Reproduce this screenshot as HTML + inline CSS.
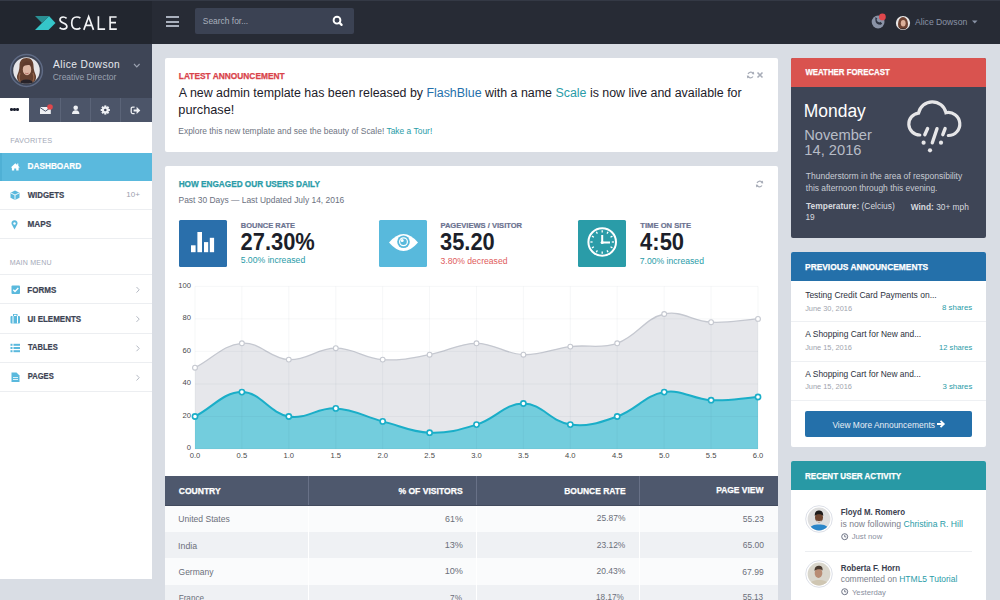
<!DOCTYPE html>
<html><head><meta charset="utf-8">
<style>
*{box-sizing:border-box;margin:0;padding:0}
html,body{width:1000px;height:600px;overflow:hidden}
body{background:#d9dde4;font-family:"Liberation Sans",sans-serif;position:relative;color:#2c313d}
.abs{position:absolute}
.t{position:absolute;white-space:nowrap;line-height:1}
/* topbar */
#top{left:0;top:0;width:1000px;height:43.5px;background:#272b35}
#logo{left:0;top:0;width:151.5px;height:43.5px;background:#22262f}
/* sidebar */
#side{left:0;top:43.5px;width:151.5px;height:535.5px;background:#fff}
#user{left:0;top:0;width:151.5px;height:54.2px;background:#3e4556}
#tabs{left:0;top:54.2px;width:151.5px;height:23.9px;overflow:hidden;background:#4c5569}
.card{position:absolute;background:#fff;border-radius:2px}
.hdr{font-weight:bold;font-size:8.6px;-webkit-text-stroke:0.25px currentColor}
.bo{-webkit-text-stroke:0.2px currentColor}
.mi{position:absolute;left:0;width:151.5px;border-bottom:1px solid #eceef1}
.mi .lbl{position:absolute;left:28px;font-weight:bold;font-size:8.8px;color:#3c4353;line-height:1}
#t1{font-size:8.42px!important;transform:translate(-0.66px,0.94px) scaleX(1.000);transform-origin:0 0}
#t2{font-size:8.63px!important;transform:translate(-0.30px,0.29px) scaleX(1.000);transform-origin:0 0}
#t3{font-size:10.22px!important;transform:translate(-0.26px,1.37px) scaleX(1.000);transform-origin:0 0}
#t4{font-size:8.47px!important;transform:translate(-0.46px,0.74px) scaleX(1.000);transform-origin:0 0}
#t5{font-size:7.60px!important;transform:translate(-0.86px,0.34px) scaleX(0.964);transform-origin:0 0}
#t6{font-size:8.60px!important;transform:translate(-0.47px,-0.62px) scaleX(0.959);transform-origin:0 0}
#t7{font-size:8.60px!important;transform:translate(-0.28px,-0.87px) scaleX(0.910);transform-origin:0 0}
#t8{font-size:8.00px!important;transform:translate(-0.74px,-0.54px) scaleX(1.000);transform-origin:0 0}
#t9{font-size:8.60px!important;transform:translate(-0.59px,-0.66px) scaleX(0.956);transform-origin:0 0}
#t10{font-size:7.60px!important;transform:translate(-1.32px,-0.53px) scaleX(0.928);transform-origin:0 0}
#t11{font-size:8.60px!important;transform:translate(-0.63px,-0.11px) scaleX(0.932);transform-origin:0 0}
#t12{font-size:8.60px!important;transform:translate(-0.56px,0.34px) scaleX(0.929);transform-origin:0 0}
#t13{font-size:8.60px!important;transform:translate(0.07px,-0.57px) scaleX(0.877);transform-origin:0 0}
#t14{font-size:8.60px!important;transform:translate(-0.31px,-0.72px) scaleX(0.884);transform-origin:0 0}
#t15{font-size:8.40px!important;transform:translate(-0.20px,-1.28px) scaleX(0.998);transform-origin:0 0}
#t16{font-size:12.41px!important;transform:translate(-0.16px,-0.73px) scaleX(1.000);transform-origin:0 0}
#t17{font-size:12.74px!important;transform:translate(-0.63px,-0.10px) scaleX(1.000);transform-origin:0 0}
#t18{font-size:8.45px!important;transform:translate(-0.68px,0.38px) scaleX(1.000);transform-origin:0 0}
#t19{font-size:8.40px!important;transform:translate(-0.34px,-0.93px) scaleX(0.981);transform-origin:0 0}
#t20{font-size:8.43px!important;transform:translate(-0.48px,0.77px) scaleX(1.000);transform-origin:0 0}
#t21{font-size:7.40px!important;transform:translate(-0.15px,-0.52px) scaleX(1.010);transform-origin:0 0}
#t22{font-size:23.25px!important;transform:translate(-0.41px,-0.68px) scaleX(0.941);transform-origin:0 0}
#t23{font-size:8.68px!important;transform:translate(-0.36px,-0.59px) scaleX(1.000);transform-origin:0 0}
#t24{font-size:7.40px!important;transform:translate(-0.57px,-0.66px) scaleX(1.023);transform-origin:0 0}
#t25{font-size:23.25px!important;transform:translate(-0.92px,-0.66px) scaleX(0.939);transform-origin:0 0}
#t26{font-size:8.62px!important;transform:translate(-0.23px,-0.14px) scaleX(1.000);transform-origin:0 0}
#t27{font-size:7.40px!important;transform:translate(0.33px,-0.51px) scaleX(1.030);transform-origin:0 0}
#t28{font-size:23.25px!important;transform:translate(0.09px,-1.01px) scaleX(0.945);transform-origin:0 0}
#t29{font-size:8.62px!important;transform:translate(-0.59px,-0.13px) scaleX(1.000);transform-origin:0 0}
#t30{font-size:8.70px!important;transform:translate(-0.29px,-1.20px) scaleX(0.984);transform-origin:0 0}
#t31{font-size:8.70px!important;transform:translate(-0.59px,-1.18px) scaleX(0.988);transform-origin:0 0}
#t32{font-size:8.70px!important;transform:translate(0.21px,-1.46px) scaleX(0.973);transform-origin:0 0}
#t33{font-size:8.70px!important;transform:translate(0.16px,-1.77px) scaleX(0.972);transform-origin:0 0}
#t34{font-size:8.55px!important;transform:translate(-0.63px,0.38px) scaleX(1.000);transform-origin:0 0}
#t35{font-size:8.94px!important;transform:translate(-1.02px,-0.12px) scaleX(1.000);transform-origin:0 0}
#t36{font-size:8.43px!important;transform:translate(-1.62px,-0.52px) scaleX(1.000);transform-origin:0 0}
#t37{font-size:8.53px!important;transform:translate(-0.96px,-0.18px) scaleX(1.000);transform-origin:0 0}
#t38{font-size:8.78px!important;transform:translate(-0.88px,-0.22px) scaleX(1.000);transform-origin:0 0}
#t39{font-size:9.12px!important;transform:translate(-1.03px,-0.73px) scaleX(1.000);transform-origin:0 0}
#t40{font-size:8.42px!important;transform:translate(-1.69px,-0.97px) scaleX(1.000);transform-origin:0 0}
#t41{font-size:8.49px!important;transform:translate(-1.00px,-0.90px) scaleX(1.000);transform-origin:0 0}
#t42{font-size:8.48px!important;transform:translate(-0.43px,-0.40px) scaleX(1.000);transform-origin:0 0}
#t43{font-size:9.14px!important;transform:translate(-1.08px,-0.84px) scaleX(1.000);transform-origin:0 0}
#t44{font-size:8.49px!important;transform:translate(-1.76px,-0.74px) scaleX(1.000);transform-origin:0 0}
#t45{font-size:8.54px!important;transform:translate(-1.27px,-0.31px) scaleX(1.000);transform-origin:0 0}
#t46{font-size:8.17px!important;transform:translate(-0.33px,-0.25px) scaleX(1.000);transform-origin:0 0}
#t47{font-size:8.20px!important;transform:translate(-2.07px,-0.25px) scaleX(1.000);transform-origin:0 0}
#t48{font-size:8.20px!important;transform:translate(-3.16px,-0.71px) scaleX(1.000);transform-origin:0 0}
#t49{font-size:8.20px!important;transform:translate(-1.82px,-0.55px) scaleX(1.000);transform-origin:0 0}
#t50{font-size:8.40px!important;transform:translate(0.41px,-1.71px) scaleX(0.936);transform-origin:0 0}
#t51{font-size:17.47px!important;transform:translate(-0.76px,0.50px) scaleX(1.000);transform-origin:0 0}
#t52{font-size:14.70px!important;transform:translate(-0.37px,-1.41px) scaleX(1.000);transform-origin:0 0}
#t53{font-size:14.69px!important;transform:translate(-0.17px,-1.39px) scaleX(1.000);transform-origin:0 0}
#t54{font-size:8.51px!important;transform:translate(1.28px,0.33px) scaleX(1.000);transform-origin:0 0}
#t55{font-size:8.44px!important;transform:translate(1.36px,0.64px) scaleX(1.000);transform-origin:0 0}
#t56{font-size:8.41px!important;transform:translate(1.60px,0.34px) scaleX(1.000);transform-origin:0 0}
#t57{font-size:8.32px!important;transform:translate(0.89px,-0.69px) scaleX(1.000);transform-origin:0 0}
#t58{font-size:8.35px!important;transform:translate(0.73px,1.74px) scaleX(1.000);transform-origin:0 0}
#t59{font-size:8.80px!important;transform:translate(0.04px,-1.47px) scaleX(0.953);transform-origin:0 0}
#t60{font-size:8.49px!important;transform:translate(0.16px,0.10px) scaleX(1.000);transform-origin:0 0}
#t61{font-size:7.40px!important;transform:translate(0.14px,-0.25px) scaleX(1.000);transform-origin:0 0}
#t62{font-size:7.86px!important;transform:translate(-0.28px,-0.52px) scaleX(1.000);transform-origin:0 0}
#t63{font-size:8.41px!important;transform:translate(0.31px,-0.57px) scaleX(1.000);transform-origin:0 0}
#t64{font-size:7.39px!important;transform:translate(0.18px,-0.99px) scaleX(1.000);transform-origin:0 0}
#t65{font-size:7.59px!important;transform:translate(-0.16px,-1.03px) scaleX(1.000);transform-origin:0 0}
#t66{font-size:8.40px!important;transform:translate(0.36px,-0.15px) scaleX(1.000);transform-origin:0 0}
#t67{font-size:7.39px!important;transform:translate(0.17px,-0.61px) scaleX(1.000);transform-origin:0 0}
#t68{font-size:7.82px!important;transform:translate(-0.12px,-0.55px) scaleX(1.000);transform-origin:0 0}
#t69{font-size:8.45px!important;transform:translate(-0.11px,0.78px) scaleX(1.000);transform-origin:0 0}
#t70{font-size:8.80px!important;transform:translate(0.06px,-1.31px) scaleX(0.913);transform-origin:0 0}
#t71{font-size:8.90px!important;transform:translate(-0.35px,0.43px) scaleX(0.894);transform-origin:0 0}
#t72{font-size:8.65px!important;transform:translate(0.09px,0.16px) scaleX(1.000);transform-origin:0 0}
#t73{font-size:7.77px!important;transform:translate(-0.36px,-0.04px) scaleX(1.000);transform-origin:0 0}
#t74{font-size:8.90px!important;transform:translate(-0.37px,0.81px) scaleX(0.900);transform-origin:0 0}
#t75{font-size:8.50px!important;transform:translate(0.13px,0.37px) scaleX(1.000);transform-origin:0 0}
#t76{font-size:7.72px!important;transform:translate(-0.09px,0.52px) scaleX(1.000);transform-origin:0 0}
</style></head><body>
<div id="top" class="abs"></div>
<div id="logo" class="abs">
  <svg class="abs" style="left:0;top:0" width="152" height="44">
    <polygon points="35,30 49,16 55.5,23 48.5,30" fill="#35c5c9"/>
    <polygon points="35,16 49,16 42,23" fill="#2a8f93"/>
  </svg>
  <svg class="abs" style="left:0;top:0" width="152" height="44"><g fill="none" stroke="#f4f5f7" stroke-width="1.65" stroke-linecap="butt">
    <path d="M66.6,18.3 C65.6,17.4 64.4,17 63.2,17 C61.2,17 60,18.1 60,19.8 C60,21.5 61.3,22.2 63.3,23 C65.6,23.9 66.9,24.8 66.9,26.5 C66.9,28.2 65.5,29.1 63.3,29.1 C61.9,29.1 60.6,28.6 59.6,27.6"/>
    <path d="M80.4,18.2 C79.4,17.3 78.1,17 76.8,17 C73.5,17 71.7,19.5 71.7,23.05 C71.7,26.6 73.4,29.1 76.8,29.1 C78.1,29.1 79.4,28.8 80.4,28"/>
    <path d="M83.8,29.9 L88.65,16.6 L93.5,29.9 M85.5,25.3 H91.8"/>
    <path d="M98.4,16.2 V29.1 H105.1"/>
    <path d="M110.1,16.2 V29.1 H116.8 M110.1,17 H116.6 M110.1,22.6 H116"/>
  </g></svg>
</div>
<div class="abs" style="left:0;top:0;width:1000px;height:1px;background:#343945"></div>
<!-- hamburger -->
<div class="abs" style="left:166px;top:16.3px;width:13px;height:2px;background:#a9b0bd"></div>
<div class="abs" style="left:166px;top:20.6px;width:13px;height:2px;background:#a9b0bd"></div>
<div class="abs" style="left:166px;top:24.9px;width:13px;height:2px;background:#a9b0bd"></div>
<!-- search -->
<div class="abs" style="left:195px;top:8px;width:158.5px;height:26px;background:#3b4253;border-radius:2px"></div>
<div id="t1" class="t" style="left:203.5px;top:16px;font-size:9.6px;color:#a9b0bd">Search for...</div>
<svg class="abs" style="left:330px;top:15px" width="14" height="14">
  <circle cx="7" cy="5.2" r="3.4" fill="none" stroke="#fff" stroke-width="1.9"/>
  <line x1="9.6" y1="7.9" x2="11.6" y2="9.9" stroke="#fff" stroke-width="2.2" stroke-linecap="round"/>
</svg>
<!-- right top -->
<svg class="abs" style="left:868px;top:10px" width="24" height="24">
  <circle cx="10.1" cy="12" r="6.4" fill="#8a93a6"/>
  <path d="M7.3,9.2 q0,5.6 5.6,5.6 l1.3,-1.3 -1.8,-1.8 -1.1,0.9 q-2.2,-0.9 -2.8,-2.8 l0.9,-1.1 -1.8,-1.8z" fill="#2e3442"/>
  <circle cx="14.4" cy="6.9" r="3.4" fill="#e0474c"/>
</svg>
<svg class="abs" style="left:895px;top:14.5px" width="16" height="16">
  <defs><clipPath id="cpa"><circle cx="8" cy="8" r="6.3"/></clipPath></defs>
  <circle cx="8" cy="8" r="7.1" fill="#e8e8e8"/>
  <g clip-path="url(#cpa)"><rect width="16" height="16" fill="#e9e6e6"/>
  <ellipse cx="8" cy="9" rx="5" ry="7" fill="#6e4333"/>
  <ellipse cx="8.2" cy="8.2" rx="2.4" ry="3.3" fill="#dcb09a"/>
  <ellipse cx="8" cy="15.5" rx="4" ry="2.2" fill="#2a2426"/></g>
</svg>
<div id="t2" class="t" style="left:915.3px;top:17.5px;font-size:9.3px;color:#8a93a6">Alice Dowson</div>
<svg class="abs" style="left:971px;top:19px" width="8" height="6"><polygon points="1,1.5 6.5,1.5 3.75,4.5" fill="#8a93a6"/></svg>

<!-- sidebar -->
<div id="side" class="abs">
  <div id="user" class="abs">
    <svg class="abs" style="left:9.4px;top:9.9px" width="36" height="36">
      <defs><clipPath id="cps"><circle cx="17.5" cy="17.5" r="13.3"/></clipPath></defs>
      <circle cx="17.5" cy="17.5" r="15.9" fill="none" stroke="#5f6b85" stroke-width="1.5"/>
      <g clip-path="url(#cps)"><rect width="36" height="36" fill="#e6e5e7"/>
      <path d="M17.5,5 C12.5,5 10.5,8.5 10.5,13 C10.5,17 9,20 8,23 C7.5,26 9.5,28.5 11,30 L24.5,30 C26,28 27.5,26 27,23 C26,20 24.5,17 24.5,13 C24.5,8.5 22.5,5 17.5,5Z" fill="#64402f"/>
      <path d="M11,20 C10,23 9.5,26 11.5,29 M24,20 C25,23 25.5,26 23.5,29" stroke="#94654c" stroke-width="1.2" fill="none"/>
      <ellipse cx="18" cy="16.5" rx="4.2" ry="5.8" fill="#dcb6a3"/>
      <path d="M13,14.5 C13.5,10 16,8.5 18.5,8.5 C21.5,8.5 23,10.5 23,13.5 C21,11.5 16.5,11.5 13,14.5Z" fill="#5e3a2c"/>
      <path d="M16.2,20.2 Q17.8,21.2 19.5,20.2" stroke="#b06a60" stroke-width="0.9" fill="none"/>
      <ellipse cx="17.5" cy="31.5" rx="7.5" ry="5" fill="#27232a"/></g>
    </svg>
    <div id="t3" class="t" style="left:53.2px;top:15.5px;font-size:10.6px;color:#e6e9ee;letter-spacing:0.45px">Alice Dowson</div>
    <div id="t4" class="t" style="left:53.2px;top:28.5px;font-size:9px;color:#9aa1b0">Creative Director</div>
    <svg class="abs" style="left:133px;top:19px" width="8" height="6"><polyline points="1,1 3.8,4 6.6,1" fill="none" stroke="#9aa1b0" stroke-width="1.1"/></svg>
  </div>
  <div id="tabs" class="abs">
    <div class="abs" style="left:0;top:0;width:29px;height:24.5px;background:#fff"></div>
    <div class="abs" style="left:10.2px;top:10.6px;width:2.5px;height:2.5px;border-radius:50%;background:#1c2030;box-shadow:3px 0 #1c2030,6px 0 #1c2030"></div>
    <div class="abs" style="left:60px;top:0;width:1px;height:24.5px;background:#5b6478"></div>
    <div class="abs" style="left:90px;top:0;width:1px;height:24.5px;background:#5b6478"></div>
    <div class="abs" style="left:120px;top:0;width:1px;height:24.5px;background:#5b6478"></div>
    <!-- envelope -->
    <svg class="abs" style="left:39px;top:5.3px" width="16" height="14">
      <rect x="1" y="4" width="10.8" height="7" fill="#eef0f4"/>
      <polyline points="1,4.5 6.4,8.2 11.8,4.5" fill="none" stroke="#4c5569" stroke-width="1"/>
      <circle cx="11" cy="4" r="2.8" fill="#e0474c"/>
    </svg>
    <!-- user -->
    <svg class="abs" style="left:70px;top:5.3px" width="12" height="13">
      <circle cx="5.7" cy="4.7" r="2.3" fill="#eef0f4"/>
      <path d="M2,11 q0,-3.8 3.7,-3.8 q3.7,0 3.7,3.8z" fill="#eef0f4"/>
    </svg>
    <!-- cog -->
    <svg class="abs" style="left:99px;top:5.3px" width="13" height="13">
      <g fill="#eef0f4" transform="translate(6.3,7)">
        <circle r="3.4"/>
        <rect x="-1" y="-4.6" width="2" height="9.2"/>
        <rect x="-1" y="-4.6" width="2" height="9.2" transform="rotate(45)"/>
        <rect x="-1" y="-4.6" width="2" height="9.2" transform="rotate(90)"/>
        <rect x="-1" y="-4.6" width="2" height="9.2" transform="rotate(135)"/>
      </g>
      <circle cx="6.3" cy="7" r="1.3" fill="#3a4154"/>
    </svg>
    <!-- sign out -->
    <svg class="abs" style="left:129px;top:5.3px" width="14" height="13">
      <path d="M5.6,4.1 h-1.9 q-1.5,0 -1.5,1.5 v3.5 q0,1.5 1.5,1.5 h1.9" fill="none" stroke="#eef0f4" stroke-width="1.3"/>
      <path d="M4.6,6.4 h3 v-2.6 l3.7,3.6 -3.7,3.6 v-2.6 h-3z" fill="#eef0f4"/>
    </svg>
  </div>
  <div id="t5" class="t" style="left:10.5px;top:93.5px;font-size:8px;color:#a4a9b8;letter-spacing:0.2px">FAVORITES</div>
  <div class="abs" style="left:0;top:109.5px;width:151.5px;height:28px;background:#5ab9dd"></div>
  <div class="abs" style="left:0;top:109.5px;width:2px;height:28px;background:#4fb0d5"></div>
  <!-- home icon -->
  <svg class="abs" style="left:0;top:110px" width="30" height="20">
    <path d="M15.3,9.3 L10.8,13.4 H11.9 V16.5 H14.2 V14.4 H16.2 V16.5 H18.6 V13.4 H19.9 L18.3,12 V9.6 H17.2 V11 Z" fill="#fff"/>
  </svg>
  <div id="t6" class="t bo" style="left:28px;top:119px;font-size:8.8px;font-weight:bold;color:#fff">DASHBOARD</div>
  <div class="mi" style="top:137.5px;height:29px"></div>
  <svg class="abs" style="left:10px;top:146.2px" width="11" height="11">
    <path d="M5,0.5 L9.5,2.8 V7.8 L5,10 L0.5,7.8 V2.8Z" fill="#5ab9dd"/>
    <path d="M0.8,3 L5,5 L9.2,3 M5,5 V9.8" fill="none" stroke="#fff" stroke-width="0.9"/>
  </svg>
  <div id="t7" class="t bo" style="left:28px;top:148px;font-size:8.8px;font-weight:bold;color:#3c4353">WIDGETS</div>
  <div id="t8" class="t" style="left:127px;top:148.5px;font-size:8.5px;color:#9ba1ae">10+</div>
  <div class="mi" style="top:166.5px;height:28.5px"></div>
  <svg class="abs" style="left:11px;top:176px" width="8" height="10">
    <path d="M3.5,9.5 L0.8,4.5 A3,3 0 1 1 6.2,4.5Z" fill="#5ab9dd"/>
    <circle cx="3.5" cy="3.5" r="1.2" fill="#fff"/>
  </svg>
  <div id="t9" class="t bo" style="left:28px;top:177px;font-size:8.8px;font-weight:bold;color:#3c4353">MAPS</div>

  <div id="t10" class="t" style="left:10.5px;top:216px;font-size:8px;color:#a4a9b8;letter-spacing:0.2px">MAIN MENU</div>
  <div class="abs" style="left:0;top:230.5px;width:151.5px;height:1px;background:#eceef1"></div>
  <div class="mi" style="top:231.5px;height:29.3px"></div>
  <div class="mi" style="top:260.8px;height:29.3px"></div>
  <div class="mi" style="top:290.1px;height:29.3px"></div>
  <div class="mi" style="top:319.4px;height:29.3px"></div>
  <!-- forms icon -->
  <svg class="abs" style="left:10.5px;top:241.5px" width="10" height="10">
    <rect x="0.5" y="0.5" width="8.5" height="8.5" rx="1" fill="#5ab9dd"/>
    <polyline points="2.3,4.8 4,6.5 7.3,3" fill="none" stroke="#fff" stroke-width="1.3"/>
  </svg>
  <div id="t11" class="t bo" style="left:28px;top:242.5px;font-size:8.8px;font-weight:bold;color:#3c4353">FORMS</div>
  <svg class="abs" style="left:10px;top:270.5px" width="11" height="10">
    <rect x="0.5" y="2" width="9.5" height="7.5" rx="1" fill="#5ab9dd"/>
    <rect x="3.5" y="0.3" width="3.5" height="2.4" fill="none" stroke="#5ab9dd" stroke-width="1"/>
    <rect x="2.5" y="2" width="1" height="7.5" fill="#fff"/>
    <rect x="7" y="2" width="1" height="7.5" fill="#fff"/>
  </svg>
  <div id="t12" class="t bo" style="left:28px;top:271.5px;font-size:8.8px;font-weight:bold;color:#3c4353">UI ELEMENTS</div>
  <svg class="abs" style="left:10px;top:299.5px" width="11" height="10">
    <g fill="#5ab9dd">
      <rect x="0.5" y="0.8" width="2" height="2"/><rect x="3.5" y="0.8" width="6.5" height="2"/>
      <rect x="0.5" y="4" width="2" height="2"/><rect x="3.5" y="4" width="6.5" height="2"/>
      <rect x="0.5" y="7.2" width="2" height="2"/><rect x="3.5" y="7.2" width="6.5" height="2"/>
    </g>
  </svg>
  <div id="t13" class="t bo" style="left:28px;top:300.5px;font-size:8.8px;font-weight:bold;color:#3c4353">TABLES</div>
  <svg class="abs" style="left:11px;top:328.5px" width="10" height="11">
    <path d="M0.5,0.5 H5.5 L8.5,3.5 V10 H0.5Z" fill="#5ab9dd"/>
    <path d="M2,5.5 H7 M2,7.5 H7" stroke="#fff" stroke-width="0.8"/>
  </svg>
  <div id="t14" class="t bo" style="left:28px;top:329.5px;font-size:8.8px;font-weight:bold;color:#3c4353">PAGES</div>
  <svg class="abs" style="left:135px;top:242px" width="6" height="100">
    <g fill="none" stroke="#b5bac4" stroke-width="1">
      <polyline points="1.5,1 4.2,3.8 1.5,6.6"/>
      <polyline points="1.5,30.3 4.2,33.1 1.5,35.9"/>
      <polyline points="1.5,59.6 4.2,62.4 1.5,65.2"/>
      <polyline points="1.5,88.9 4.2,91.7 1.5,94.5"/>
    </g>
  </svg>
</div>

<!-- announcement card -->
<div class="card" style="left:165px;top:57.5px;width:613px;height:94.5px">
  <div id="t15" class="t hdr" style="left:14px;top:15px;color:#d9434a">LATEST ANNOUNCEMENT</div>
  <div id="t16" class="t" style="left:14px;top:30px;font-size:12.2px;color:#1c2029">A new admin template has been released by <span style="color:#2470ab">FlashBlue</span> with a name <span style="color:#2a9ca8">Scale</span> is now live and available for</div>
  <div id="t17" class="t" style="left:14px;top:46.3px;font-size:12.2px;color:#1c2029">purchase!</div>
  <div id="t18" class="t" style="left:14px;top:69.5px;font-size:8.8px;color:#6e7482">Explore this new template and see the beauty of Scale! <span style="color:#2a9ca8">Take a Tour!</span></div>
  <svg class="abs" style="left:581px;top:12.5px" width="20" height="10">
    <g fill="none" stroke="#a8adb8" stroke-width="1.2">
      <path d="M7.5,3.5 A3.2,3.2 0 0 0 2,4"/>
      <path d="M1.5,6 A3.2,3.2 0 0 0 7,6.5"/>
    </g>
    <polygon points="7.9,1.5 8.2,4.5 5.5,4" fill="#a8adb8"/>
    <polygon points="1.2,8.5 0.9,5.5 3.6,6" fill="#a8adb8"/>
    <path d="M11.5,2.5 L16.5,7.5 M16.5,2.5 L11.5,7.5" stroke="#a8adb8" stroke-width="1.6"/>
  </svg>
</div>

<!-- chart card -->
<div class="card" style="left:165px;top:165.5px;width:613px;height:311px;border-radius:2px 2px 0 0">
  <div id="t19" class="t hdr" style="left:14px;top:15px;color:#2a9ca8">HOW ENGAGED OUR USERS DAILY</div>
  <div id="t20" class="t" style="left:14px;top:29.5px;font-size:9.5px;color:#6b7080">Past 30 Days — Last Updated July 14, 2016</div>
  <svg class="abs" style="left:590px;top:13px" width="10" height="10">
    <g fill="none" stroke="#a8adb8" stroke-width="1.2">
      <path d="M7.5,3.5 A3.2,3.2 0 0 0 2,4"/>
      <path d="M1.5,6 A3.2,3.2 0 0 0 7,6.5"/>
    </g>
    <polygon points="7.9,1.5 8.2,4.5 5.5,4" fill="#a8adb8"/>
    <polygon points="1.2,8.5 0.9,5.5 3.6,6" fill="#a8adb8"/>
  </svg>
  <!-- stat 1 -->
  <div class="abs" style="left:14px;top:54.5px;width:47.7px;height:46.5px;background:#2a6fab;border-radius:1.5px"></div>
  <svg class="abs" style="left:14px;top:54.5px" width="48" height="47">
    <g fill="#fff"><rect x="12" y="25.3" width="4.6" height="6.9"/><rect x="18.4" y="12" width="4.6" height="20.2"/><rect x="25" y="22.1" width="4.2" height="10.1"/><rect x="30.8" y="17.8" width="4.3" height="14.4"/></g>
  </svg>
  <div id="t21" class="t bo" style="left:76px;top:57.5px;font-size:7.8px;font-weight:bold;color:#6b7290">BOUNCE RATE</div>
  <div id="t22" class="t" style="left:76px;top:66.5px;font-size:21.8px;font-weight:bold;color:#1c1f2a">27.30%</div>
  <div id="t23" class="t" style="left:76px;top:91px;font-size:9px;color:#2a9ca8">5.00% increased</div>
  <!-- stat 2 -->
  <div class="abs" style="left:213.8px;top:54.5px;width:48px;height:46.5px;background:#58b9dc;border-radius:1.5px"></div>
  <svg class="abs" style="left:213.8px;top:54.5px" width="48" height="47">
    <path d="M10,22.5 Q24.5,5.5 39,22.5 Q24.5,39.5 10,22.5Z" fill="#fff"/>
    <circle cx="24.5" cy="21.7" r="6.3" fill="#58b9dc"/>
    <circle cx="24.5" cy="21.7" r="3.9" fill="none" stroke="#fff" stroke-width="1.2"/>
    <circle cx="23.2" cy="20.6" r="1.5" fill="#fff"/>
  </svg>
  <div id="t24" class="t bo" style="left:275.7px;top:57.5px;font-size:7.8px;font-weight:bold;color:#6b7290">PAGEVIEWS / VISITOR</div>
  <div id="t25" class="t" style="left:275.7px;top:66.5px;font-size:21.8px;font-weight:bold;color:#1c1f2a">35.20</div>
  <div id="t26" class="t" style="left:275.7px;top:91px;font-size:9px;color:#e05c5c">3.80% decreased</div>
  <!-- stat 3 -->
  <div class="abs" style="left:413.3px;top:54.5px;width:47.7px;height:46.5px;background:#2a9ca8;border-radius:1.5px"></div>
  <svg class="abs" style="left:413.3px;top:54.5px" width="48" height="47">
    <circle cx="24.2" cy="22" r="13.8" fill="none" stroke="#fff" stroke-width="2"/>
    <g stroke="#fff" stroke-width="1.3" transform="translate(24.2,22)">
      <line x1="0" y1="-11.8" x2="0" y2="-9.6"/><line x1="0" y1="11.8" x2="0" y2="9.6"/>
      <line x1="-11.8" y1="0" x2="-9.6" y2="0"/><line x1="11.8" y1="0" x2="9.6" y2="0"/>
      <line x1="0" y1="-11.8" x2="0" y2="-9.6" transform="rotate(30)"/><line x1="0" y1="-11.8" x2="0" y2="-9.6" transform="rotate(60)"/>
      <line x1="0" y1="-11.8" x2="0" y2="-9.6" transform="rotate(120)"/><line x1="0" y1="-11.8" x2="0" y2="-9.6" transform="rotate(150)"/>
      <line x1="0" y1="-11.8" x2="0" y2="-9.6" transform="rotate(210)"/><line x1="0" y1="-11.8" x2="0" y2="-9.6" transform="rotate(240)"/>
      <line x1="0" y1="-11.8" x2="0" y2="-9.6" transform="rotate(300)"/><line x1="0" y1="-11.8" x2="0" y2="-9.6" transform="rotate(330)"/>
    </g>
    <path d="M24.2,15 V22.5 H32" fill="none" stroke="#fff" stroke-width="2"/>
    <circle cx="24.2" cy="22.5" r="1.6" fill="#fff"/>
  </svg>
  <div id="t27" class="t bo" style="left:475.4px;top:57.5px;font-size:7.8px;font-weight:bold;color:#6b7290">TIME ON SITE</div>
  <div id="t28" class="t" style="left:475.4px;top:66.5px;font-size:21.8px;font-weight:bold;color:#1c1f2a">4:50</div>
  <div id="t29" class="t" style="left:475.4px;top:91px;font-size:9px;color:#2a9ca8">7.00% increased</div>
</div>
<svg width="1000" height="600" style="position:absolute;left:0;top:0">
<path d="M195.0,367.7 C213.8,357.9 222.6,345.0 241.9,343.3 C260.1,341.7 269.8,358.6 288.8,359.6 C307.3,360.5 317.0,348.2 335.8,348.2 C354.5,348.2 363.7,358.3 382.7,359.6 C401.2,360.9 411.0,357.9 429.6,354.7 C448.6,351.4 457.7,343.3 476.5,343.3 C495.3,343.3 504.5,354.0 523.4,354.7 C542.1,355.3 551.5,348.9 570.3,346.6 C589.0,344.3 600.0,349.3 617.2,343.3 C637.5,336.3 644.0,318.6 664.2,314.0 C681.5,310.1 692.2,321.2 711.1,322.2 C729.7,323.1 739.2,320.2 758.0,318.9 L758.0,449.0 L195.0,449.0 Z" fill="#e6e7eb"/>
<path d="M195.0,367.7 C213.8,357.9 222.6,345.0 241.9,343.3 C260.1,341.7 269.8,358.6 288.8,359.6 C307.3,360.5 317.0,348.2 335.8,348.2 C354.5,348.2 363.7,358.3 382.7,359.6 C401.2,360.9 411.0,357.9 429.6,354.7 C448.6,351.4 457.7,343.3 476.5,343.3 C495.3,343.3 504.5,354.0 523.4,354.7 C542.1,355.3 551.5,348.9 570.3,346.6 C589.0,344.3 600.0,349.3 617.2,343.3 C637.5,336.3 644.0,318.6 664.2,314.0 C681.5,310.1 692.2,321.2 711.1,322.2 C729.7,323.1 739.2,320.2 758.0,318.9" fill="none" stroke="#c5c8d0" stroke-width="1.3"/>
<path d="M195.0,416.5 C213.8,406.7 223.2,392.1 241.9,392.1 C260.7,392.1 269.1,413.1 288.8,416.5 C306.6,419.6 317.2,407.4 335.8,408.4 C354.7,409.3 363.8,416.5 382.7,421.4 C401.4,426.2 410.7,432.1 429.6,432.7 C448.2,433.4 458.5,430.2 476.5,424.6 C496.0,418.5 504.7,403.5 523.4,403.5 C542.2,403.5 550.8,421.9 570.3,424.6 C588.4,427.1 599.5,422.6 617.2,416.5 C637.0,409.6 644.4,395.5 664.2,392.1 C682.0,389.0 692.2,399.2 711.1,400.2 C729.7,401.2 739.2,398.3 758.0,397.0 L758.0,449.0 L195.0,449.0 Z" fill="#73cddd"/>
<path d="M195.0,416.5 C213.8,406.7 223.2,392.1 241.9,392.1 C260.7,392.1 269.1,413.1 288.8,416.5 C306.6,419.6 317.2,407.4 335.8,408.4 C354.7,409.3 363.8,416.5 382.7,421.4 C401.4,426.2 410.7,432.1 429.6,432.7 C448.2,433.4 458.5,430.2 476.5,424.6 C496.0,418.5 504.7,403.5 523.4,403.5 C542.2,403.5 550.8,421.9 570.3,424.6 C588.4,427.1 599.5,422.6 617.2,416.5 C637.0,409.6 644.4,395.5 664.2,392.1 C682.0,389.0 692.2,399.2 711.1,400.2 C729.7,401.2 739.2,398.3 758.0,397.0" fill="none" stroke="#1aaec8" stroke-width="2"/>
<g stroke="#1e2a44" stroke-opacity="0.04" stroke-width="1"><line x1="195.0" y1="286.4" x2="195.0" y2="449.0"/><line x1="241.9" y1="286.4" x2="241.9" y2="449.0"/><line x1="288.8" y1="286.4" x2="288.8" y2="449.0"/><line x1="335.8" y1="286.4" x2="335.8" y2="449.0"/><line x1="382.7" y1="286.4" x2="382.7" y2="449.0"/><line x1="429.6" y1="286.4" x2="429.6" y2="449.0"/><line x1="476.5" y1="286.4" x2="476.5" y2="449.0"/><line x1="523.4" y1="286.4" x2="523.4" y2="449.0"/><line x1="570.3" y1="286.4" x2="570.3" y2="449.0"/><line x1="617.2" y1="286.4" x2="617.2" y2="449.0"/><line x1="664.2" y1="286.4" x2="664.2" y2="449.0"/><line x1="711.1" y1="286.4" x2="711.1" y2="449.0"/><line x1="758.0" y1="286.4" x2="758.0" y2="449.0"/><line x1="195.0" y1="449.0" x2="758.0" y2="449.0"/><line x1="195.0" y1="416.5" x2="758.0" y2="416.5"/><line x1="195.0" y1="384.0" x2="758.0" y2="384.0"/><line x1="195.0" y1="351.4" x2="758.0" y2="351.4"/><line x1="195.0" y1="318.9" x2="758.0" y2="318.9"/><line x1="195.0" y1="286.4" x2="758.0" y2="286.4"/></g>
<g fill="#fff" stroke="#c5c8d0" stroke-width="1.1"><circle cx="195.0" cy="367.7" r="2.4"/><circle cx="241.9" cy="343.3" r="2.4"/><circle cx="288.8" cy="359.6" r="2.4"/><circle cx="335.8" cy="348.2" r="2.4"/><circle cx="382.7" cy="359.6" r="2.4"/><circle cx="429.6" cy="354.7" r="2.4"/><circle cx="476.5" cy="343.3" r="2.4"/><circle cx="523.4" cy="354.7" r="2.4"/><circle cx="570.3" cy="346.6" r="2.4"/><circle cx="617.2" cy="343.3" r="2.4"/><circle cx="664.2" cy="314.0" r="2.4"/><circle cx="711.1" cy="322.2" r="2.4"/><circle cx="758.0" cy="318.9" r="2.4"/></g>
<g fill="#fff" stroke="#1aaec8" stroke-width="1.6"><circle cx="195.0" cy="416.5" r="2.6"/><circle cx="241.9" cy="392.1" r="2.6"/><circle cx="288.8" cy="416.5" r="2.6"/><circle cx="335.8" cy="408.4" r="2.6"/><circle cx="382.7" cy="421.4" r="2.6"/><circle cx="429.6" cy="432.7" r="2.6"/><circle cx="476.5" cy="424.6" r="2.6"/><circle cx="523.4" cy="403.5" r="2.6"/><circle cx="570.3" cy="424.6" r="2.6"/><circle cx="617.2" cy="416.5" r="2.6"/><circle cx="664.2" cy="392.1" r="2.6"/><circle cx="711.1" cy="400.2" r="2.6"/><circle cx="758.0" cy="397.0" r="2.6"/></g>
<g font-family="Liberation Sans" font-size="7.6" fill="#4a4a4a"><text x="191" y="450.4" text-anchor="end">0</text><text x="191" y="417.9" text-anchor="end">20</text><text x="191" y="385.4" text-anchor="end">40</text><text x="191" y="352.8" text-anchor="end">60</text><text x="191" y="320.3" text-anchor="end">80</text><text x="191" y="287.8" text-anchor="end">100</text><text x="195.0" y="458.2" text-anchor="middle">0.0</text><text x="241.9" y="458.2" text-anchor="middle">0.5</text><text x="288.8" y="458.2" text-anchor="middle">1.0</text><text x="335.8" y="458.2" text-anchor="middle">1.5</text><text x="382.7" y="458.2" text-anchor="middle">2.0</text><text x="429.6" y="458.2" text-anchor="middle">2.5</text><text x="476.5" y="458.2" text-anchor="middle">3.0</text><text x="523.4" y="458.2" text-anchor="middle">3.5</text><text x="570.3" y="458.2" text-anchor="middle">4.0</text><text x="617.2" y="458.2" text-anchor="middle">4.5</text><text x="664.2" y="458.2" text-anchor="middle">5.0</text><text x="711.1" y="458.2" text-anchor="middle">5.5</text><text x="758.0" y="458.2" text-anchor="middle">6.0</text></g>
</svg>

<!-- table -->
<div class="abs" style="left:165px;top:476px;width:613px;height:124px;background:#fff">
  <div class="abs" style="left:0;top:0;width:613px;height:29.5px;background:#4e586d;border-bottom:1px solid #424b5e"></div>
  <div class="abs" style="left:143px;top:0;width:1px;height:29px;background:#687187"></div>
  <div class="abs" style="left:311px;top:0;width:1px;height:29px;background:#687187"></div>
  <div class="abs" style="left:474px;top:0;width:1px;height:29px;background:#687187"></div>
  <div id="t30" class="t hdr" style="left:14px;top:12px;color:#fff;font-size:8.8px">COUNTRY</div>
  <div id="t31" class="t hdr" style="right:314px;top:12px;color:#fff;font-size:8.8px">% OF VISITORS</div>
  <div id="t32" class="t hdr" style="right:151px;top:12px;color:#fff;font-size:8.8px">BOUNCE RATE</div>
  <div id="t33" class="t hdr" style="right:13px;top:12px;color:#fff;font-size:8.8px">PAGE VIEW</div>
  <div class="abs" style="left:0;top:29.5px;width:613px;height:26.5px;background:#fafbfc"></div>
  <div class="abs" style="left:0;top:56px;width:613px;height:26px;background:#eff1f4"></div>
  <div class="abs" style="left:0;top:82px;width:613px;height:27px;background:#fafbfc"></div>
  <div class="abs" style="left:0;top:109px;width:613px;height:26px;background:#eff1f4"></div>
  <div class="abs" style="left:143px;top:29.5px;width:1px;height:100px;background:#fff"></div>
  <div class="abs" style="left:311px;top:29.5px;width:1px;height:100px;background:#fff"></div>
  <div class="abs" style="left:474px;top:29.5px;width:1px;height:100px;background:#fff"></div>
  <div style="position:absolute;left:0;top:29.5px;width:613px;font-size:9px;color:#6b6f7a;line-height:1">
    <div id="t34" class="t" style="left:14px;top:9.5px">United States</div>
    <div id="t35" class="t" style="right:314px;top:9.5px">61%</div>
    <div id="t36" class="t" style="right:151px;top:9.5px">25.87%</div>
    <div id="t37" class="t" style="right:13px;top:9.5px">55.23</div>
    <div id="t38" class="t" style="left:14px;top:36px">India</div>
    <div id="t39" class="t" style="right:314px;top:36px">13%</div>
    <div id="t40" class="t" style="right:151px;top:36px">23.12%</div>
    <div id="t41" class="t" style="right:13px;top:36px">65.00</div>
    <div id="t42" class="t" style="left:14px;top:62.5px">Germany</div>
    <div id="t43" class="t" style="right:314px;top:62.5px">10%</div>
    <div id="t44" class="t" style="right:151px;top:62.5px">20.43%</div>
    <div id="t45" class="t" style="right:13px;top:62.5px">67.99</div>
    <div id="t46" class="t" style="left:14px;top:89px">France</div>
    <div id="t47" class="t" style="right:314px;top:89px">7%</div>
    <div id="t48" class="t" style="right:151px;top:89px">18.17%</div>
    <div id="t49" class="t" style="right:13px;top:89px">55.13</div>
  </div>
</div>

<!-- weather -->
<div class="card" style="left:791px;top:57.5px;width:195px;height:180px;background:#3e4556;overflow:hidden">
  <div class="abs" style="left:0;top:0;width:195px;height:29.5px;background:#d9534f"></div>
  <div id="t50" class="t hdr" style="left:13.5px;top:12px;color:#fff">WEATHER FORECAST</div>
  <div id="t51" class="t" style="left:13.5px;top:44.5px;font-size:16.8px;color:#fff">Monday</div>
  <div id="t52" class="t" style="left:13.5px;top:71px;font-size:13.2px;color:#b7bcc6">November</div>
  <div id="t53" class="t" style="left:13.5px;top:86.5px;font-size:13.2px;color:#b7bcc6">14, 2016</div>
  <div id="t54" class="t" style="left:13.5px;top:114px;font-size:9.2px;color:#c8ccd4">Thunderstorm in the area of responsibility</div>
  <div id="t55" class="t" style="left:13.5px;top:125.5px;font-size:9.2px;color:#c8ccd4">this afternoon through this evening.</div>
  <div id="t56" class="t" style="left:13.5px;top:144.5px;font-size:9.2px;color:#d6d9df"><b>Temperature:</b> (Celcius)</div>
  <div id="t57" class="t" style="left:13.5px;top:156.5px;font-size:9.2px;color:#d6d9df">19</div>
  <div id="t58" class="t" style="left:119px;top:143.5px;font-size:9.2px;color:#d6d9df"><b>Wind:</b> 30+ mph</div>
  <svg class="abs" style="left:-791px;top:-57.5px" width="1000" height="300">
    <g fill="none" stroke="#e6e6e8" stroke-linecap="round">
      <path stroke-width="3.2" d="M919.8,135 A11,11 0 0 1 918.57,113.07 A14,14 0 0 1 945.96,112.74 A11.5,11.5 0 1 1 948.3,135.5"/>
      <g stroke-width="3.4"><line x1="927.6" y1="128.5" x2="924.8" y2="134.8"/>
      <line x1="937" y1="128.7" x2="932.3" y2="142.8"/>
      <line x1="945.1" y1="128.6" x2="942.8" y2="134.7"/></g>
    </g>
    <g fill="#e6e6e8"><circle cx="923.6" cy="142.7" r="2.1"/><circle cx="941" cy="142.7" r="2.1"/><circle cx="930" cy="150.3" r="2.1"/></g>
  </svg>
</div>

<!-- previous announcements -->
<div class="card" style="left:791px;top:252px;width:195px;height:195px">
  <div class="abs" style="left:0;top:0;width:195px;height:29px;background:#2470aa;border-radius:2px 2px 0 0"></div>
  <div id="t59" class="t hdr" style="left:14px;top:11.5px;color:#fff;font-size:8.8px">PREVIOUS ANNOUNCEMENTS</div>
  <div class="abs" style="left:0;top:69px;width:195px;height:1px;background:#eef0f3"></div>
  <div class="abs" style="left:0;top:108.5px;width:195px;height:1px;background:#eef0f3"></div>
  <div class="abs" style="left:0;top:148px;width:195px;height:1px;background:#eef0f3"></div>
  <div id="t60" class="t" style="left:14px;top:39px;font-size:9.3px;color:#2c313d">Testing Credit Card Payments on...</div>
  <div id="t61" class="t" style="left:14px;top:53px;font-size:8.2px;color:#a0a4ae">June 30, 2016</div>
  <div id="t62" class="t" style="right:13.5px;top:53px;font-size:8.2px;color:#2a9ca8">8 shares</div>
  <div id="t63" class="t" style="left:14px;top:78.5px;font-size:9.3px;color:#2c313d">A Shopping Cart for New and...</div>
  <div id="t64" class="t" style="left:14px;top:92.5px;font-size:8.2px;color:#a0a4ae">June 15, 2016</div>
  <div id="t65" class="t" style="right:13.5px;top:92.5px;font-size:8.2px;color:#2a9ca8">12 shares</div>
  <div id="t66" class="t" style="left:14px;top:118px;font-size:9.3px;color:#2c313d">A Shopping Cart for New and...</div>
  <div id="t67" class="t" style="left:14px;top:132px;font-size:8.2px;color:#a0a4ae">June 15, 2016</div>
  <div id="t68" class="t" style="right:13.5px;top:132px;font-size:8.2px;color:#2a9ca8">3 shares</div>
  <div class="abs" style="left:14px;top:159px;width:167px;height:26.2px;background:#2470aa;border-radius:2px"></div>
  <div id="t69" class="t" style="left:41.5px;top:168px;font-size:9.3px;color:#e8eef5">View More Announcements</div>
  <svg class="abs" style="left:145px;top:167px" width="10" height="10">
    <path d="M1,5 H7.5 M4.5,1.8 L7.8,5 L4.5,8.2" fill="none" stroke="#fff" stroke-width="1.8"/>
  </svg>
</div>

<!-- recent activity -->
<div class="card" style="left:791px;top:461px;width:195px;height:200px">
  <div class="abs" style="left:0;top:0;width:195px;height:29px;background:#2899a5;border-radius:2px 2px 0 0"></div>
  <div id="t70" class="t hdr" style="left:14px;top:11.5px;color:#fff;font-size:8.8px">RECENT USER ACTIVITY</div>
  <svg class="abs" style="left:14.3px;top:43.6px" width="30" height="30">
    <defs><clipPath id="cp1"><circle cx="14" cy="14" r="11.4"/></clipPath></defs>
    <circle cx="14" cy="14" r="13.3" fill="#fff" stroke="#dde0e8" stroke-width="1"/>
    <g clip-path="url(#cp1)"><rect width="30" height="30" fill="#dedede"/>
    <path d="M3,30 C3,21 8,19.5 14,19.5 C20,19.5 25,21 25,30Z" fill="#2b86c9"/>
    <ellipse cx="14" cy="12.5" rx="4" ry="5" fill="#6e4631"/>
    <path d="M9.8,11 C9.5,6.5 12,5.5 14,5.5 C16,5.5 18.5,6.5 18.2,11 C17,8.5 11,8.5 9.8,11Z" fill="#1d1a19"/>
    <path d="M11.5,16 Q14,17.6 16.5,16" stroke="#f4f4f4" stroke-width="0.9" fill="none"/></g>
  </svg>
  <div id="t71" class="t" style="left:49.5px;top:47px;font-size:9.3px;font-weight:bold;color:#3c4150">Floyd M. Romero</div>
  <div id="t72" class="t" style="left:49.5px;top:59px;font-size:9.3px;color:#7b808c">is now following <span style="color:#2a9ca8">Christina R. Hill</span></div>
  <svg class="abs" style="left:49.5px;top:71.5px" width="8" height="8">
    <circle cx="3.7" cy="3.7" r="3" fill="none" stroke="#6d7385" stroke-width="1"/>
    <path d="M3.7,1.9 V3.9 H5.3" fill="none" stroke="#6d7385" stroke-width="0.9"/>
  </svg>
  <div id="t73" class="t" style="left:61px;top:72px;font-size:9px;color:#8a90a0">Just now</div>
  <div class="abs" style="left:14px;top:89.5px;width:167px;height:1px;background:#eceef1"></div>
  <svg class="abs" style="left:14.3px;top:98.5px" width="30" height="30">
    <defs><clipPath id="cp2"><circle cx="14" cy="14" r="11.4"/></clipPath></defs>
    <circle cx="14" cy="14" r="13.3" fill="#fff" stroke="#dde0e8" stroke-width="1"/>
    <g clip-path="url(#cp2)"><rect width="30" height="30" fill="#d9d6cc"/>
    <path d="M2,30 C3,22 8,20 14,20 C20,20 25,22 26,30Z" fill="#cfc6b2"/>
    <ellipse cx="13.5" cy="13" rx="3.8" ry="5" fill="#b88c74"/>
    <path d="M9.5,11 C9.5,6.5 12,5.8 14,5.8 C16,5.8 18,6.8 17.6,10.5 C16,8.5 11,8.8 9.5,11Z" fill="#4a3a30"/></g>
  </svg>
  <div id="t74" class="t" style="left:49.5px;top:102px;font-size:9.3px;font-weight:bold;color:#3c4150">Roberta F. Horn</div>
  <div id="t75" class="t" style="left:49.5px;top:114px;font-size:9.3px;color:#7b808c">commented on <span style="color:#2a9ca8">HTML5 Tutorial</span></div>
  <svg class="abs" style="left:49.5px;top:126.5px" width="8" height="8">
    <circle cx="3.7" cy="3.7" r="3" fill="none" stroke="#6d7385" stroke-width="1"/>
    <path d="M3.7,1.9 V3.9 H5.3" fill="none" stroke="#6d7385" stroke-width="0.9"/>
  </svg>
  <div id="t76" class="t" style="left:61px;top:127px;font-size:9px;color:#8a90a0">Yesterday</div>
</div>
</body></html>
